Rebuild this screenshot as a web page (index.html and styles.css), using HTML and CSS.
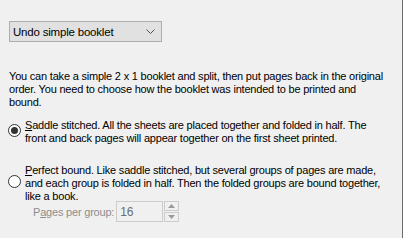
FILE: index.html
```html
<!DOCTYPE html>
<html lang="en">

<head>
    <meta charset="UTF-8">
    <meta name="viewport" content="width=device-width, initial-scale=1.0">
    <title>Undo simple booklet</title>
    <link rel="stylesheet" href="styles.css">
</head>

<body>
    <div class="panel">
        <div class="combo">
            <span class="combo-text">Undo simple booklet</span>
            <svg class="chevron" width="9" height="5" viewBox="0 0 9 5">
                <path d="M0.5 0.5 L4.5 4.5 L8.5 0.5" fill="none" stroke="#555" stroke-width="1"/>
            </svg>
        </div>

        <p class="intro">You can take a simple 2 x 1 booklet and split, then put pages back in the original<br>
            order. You need to choose how the booklet was intended to be printed and<br>
            bound.</p>

        <div class="option option-saddle">
            <span class="radio checked"></span>
            <span class="option-text"><u>S</u>addle stitched. All the sheets are placed together and folded in half. The<br>
                front and back pages will appear together on the first sheet printed.</span>
        </div>

        <div class="option option-perfect">
            <span class="radio"></span>
            <span class="option-text"><u>P</u>erfect bound. Like saddle stitched, but several groups of pages are made,<br>
                and each group is folded in half. Then the folded groups are bound together,<br>
                like a book.</span>
        </div>

        <div class="group-row">
            <span class="group-label">P<u>a</u>ges per group:</span>
            <span class="num-box">16</span>
            <span class="spinner">
                <span class="spin-btn">
                    <svg width="7" height="4" viewBox="0 0 7 4"><path d="M0 4 L3.5 0 L7 4 Z" fill="#9a9a9a"/></svg>
                </span>
                <span class="spin-btn">
                    <svg width="7" height="4" viewBox="0 0 7 4"><path d="M0 0 L3.5 4 L7 0 Z" fill="#9a9a9a"/></svg>
                </span>
            </span>
        </div>
    </div>
</body>

</html>
```

FILE: styles.css
```css
body {
    margin: 0;
    background-color: #f0f0f0;
    font-family: 'Liberation Sans', Arial, sans-serif;
    font-size: 11px;
    letter-spacing: -0.2px;
    color: #000;
}

.panel {
    width: 403px;
    height: 238px;
    box-sizing: border-box;
    border-right: 1px solid #696969;
    padding: 21px 0 0 9px;
}

.combo {
    width: 153px;
    height: 21px;
    box-sizing: border-box;
    border: 1px solid #adadad;
    background-color: #e1e1e1;
    display: flex;
    align-items: center;
    justify-content: space-between;
    padding: 0 6px 0 3px;
}

.combo-text {
    font-size: 11.5px;
}

.intro {
    margin: 28px 0 0 0;
    line-height: 13px;
    white-space: nowrap;
}

.option {
    display: flex;
    align-items: center;
    gap: 4px;
    margin-left: -1px;
    line-height: 13px;
    white-space: nowrap;
}

.option-saddle {
    margin-top: 10px;
}

.option-perfect {
    margin-top: 19px;
}

.radio {
    width: 13px;
    height: 13px;
    box-sizing: border-box;
    border: 1px solid #333;
    border-radius: 50%;
    background-color: #fff;
    flex-shrink: 0;
    display: flex;
    align-items: center;
    justify-content: center;
    margin-bottom: 4px;
}

.radio.checked::after {
    content: '';
    width: 7px;
    height: 7px;
    border-radius: 50%;
    background-color: #333;
}

.group-row {
    display: flex;
    align-items: center;
    margin: -2px 0 0 24px;
    height: 21px;
}

.group-label {
    color: #8d8d8d;
    margin-right: 2px;
    white-space: nowrap;
}

.num-box {
    width: 47px;
    height: 21px;
    box-sizing: border-box;
    border: 1px solid #cccccc;
    background-color: #f0f0f0;
    color: #6d6d6d;
    font-size: 12px;
    padding: 3px 0 0 3px;
}

.spinner {
    display: flex;
    flex-direction: column;
    gap: 1px;
    margin-left: 1px;
}

.spin-btn {
    width: 15px;
    height: 10px;
    box-sizing: border-box;
    border: 1px solid #cccccc;
    background-color: #f0f0f0;
    display: flex;
    align-items: center;
    justify-content: center;
}
```
